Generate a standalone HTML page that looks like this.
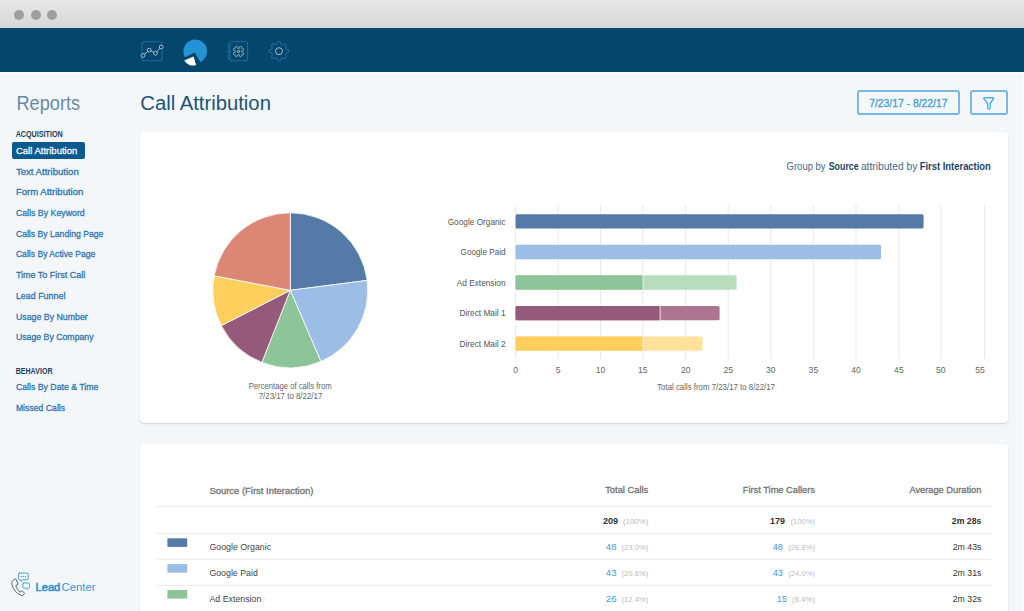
<!DOCTYPE html>
<html><head><meta charset="utf-8">
<style>
*{margin:0;padding:0;box-sizing:border-box}
html,body{width:1024px;height:611px;overflow:hidden;background:#f4f7f9;font-family:"Liberation Sans",sans-serif}
.abs{position:absolute}
#titlebar{left:0;top:0;width:1024px;height:28px;background:linear-gradient(#e8e8e8,#d6d6d6)}
.dot{width:10px;height:10px;border-radius:50%;background:#9e9e9e;top:9.5px}
#nav{left:0;top:28px;width:1024px;height:44px;background:#05466d}
.card{background:#fff;border-radius:4px;box-shadow:0 1px 1.5px rgba(70,100,130,0.22),0 0 1px rgba(70,100,130,0.12)}
svg{position:absolute;left:0;top:0}
</style></head><body>
<div id="titlebar" class="abs"></div>
<div class="abs dot" style="left:14px"></div>
<div class="abs dot" style="left:30.8px"></div>
<div class="abs dot" style="left:47.2px"></div>
<div id="nav" class="abs"></div>
<div class="abs" style="left:0;top:72px;width:1024px;height:2px;background:#fbfcfd"></div>
<div class="abs" style="left:1022.5px;top:72px;width:1.5px;height:539px;background:#fdfdfe"></div>

<div class="abs" style="left:12px;top:142.2px;width:73.3px;height:16.8px;background:#0b5a8f;border-radius:2px"></div>

<div class="abs" style="left:857.2px;top:90.3px;width:102.5px;height:24.8px;border:2px solid #78b7e3;border-radius:3px"></div>
<div class="abs" style="left:969.8px;top:90.3px;width:38.4px;height:24.8px;border:2px solid #78b7e3;border-radius:3px"></div>

<div class="abs card" style="left:140.2px;top:131.6px;width:867.8px;height:291.4px"></div>
<div class="abs card" style="left:140.2px;top:443.8px;width:867.8px;height:200px"></div>

<svg width="1024" height="611" viewBox="0 0 1024 611" font-family="Liberation Sans">
<!-- nav icons -->
<g fill="none" stroke="#1f6c9e" stroke-width="1.1">
  <rect x="142" y="41.8" width="20" height="19" rx="2"/>
</g>
<g fill="none" stroke="#a9bccb" stroke-width="1">
  <polyline points="143.1,55.5 149.2,50.1 155.5,53.2 161.2,47"/>
  <circle cx="143.1" cy="55.5" r="1.9" fill="#05466d"/>
  <circle cx="149.2" cy="50.1" r="1.9" fill="#05466d"/>
  <circle cx="155.5" cy="53.2" r="1.9" fill="#05466d"/>
  <circle cx="161.2" cy="47" r="1.9" fill="#05466d"/>
</g>
<!-- pie icon -->
<g transform="translate(0.8,-0.4)"><path d="M193.9,52.9 L199.6,62.3 A11.8,11.8 0 1 0 184.2,57.6 Z" fill="#2594d7"/></g>
<path d="M193.6,56.4 L196.1,65 A10,10 0 0 1 184.2,60.6 Z" fill="#ffffff"/>
<!-- notebook icon -->
<g fill="none" stroke="#1f6c9e" stroke-width="1.1">
  <rect x="229.4" y="41.8" width="18.2" height="19" rx="2"/>
  <circle cx="229.2" cy="45.7" r="1.5" fill="#05466d"/>
  <circle cx="229.2" cy="51.2" r="1.5" fill="#05466d"/>
  <circle cx="229.2" cy="56.7" r="1.5" fill="#05466d"/>
</g>
<g fill="none" stroke="#a9bccb" stroke-width="0.95" stroke-linejoin="round" transform="translate(238.5,51.5) scale(0.9)"><path d="M-3.6,-4.4 A1.3,1.3 0 0 1 -1.0,-4.4 V-3.6 H1.0 V-4.4 A1.3,1.3 0 0 1 3.6,-4.4 V-3.6 H4.4 A1.3,1.3 0 0 1 4.4,-1.0 H3.6 V1.0 H4.4 A1.3,1.3 0 0 1 4.4,3.6 H3.6 V4.4 A1.3,1.3 0 0 1 1.0,4.4 V3.6 H-1.0 V4.4 A1.3,1.3 0 0 1 -3.6,4.4 V3.6 H-4.4 A1.3,1.3 0 0 1 -4.4,1.0 H-3.6 V-1.0 H-4.4 A1.3,1.3 0 0 1 -4.4,-3.6 H-3.6 Z M-1.0,-1.0 H1.0 V1.0 H-1.0 Z"/></g>
<!-- gear icon -->
<path id="gear" fill="none" stroke="#1f6c9e" stroke-width="1.1" stroke-linejoin="round" d="M279.00,41.60 L279.30,41.61 L279.60,41.65 L279.89,41.73 L280.18,41.90 L280.43,42.20 L280.63,42.68 L280.79,43.21 L280.95,43.61 L281.13,43.86 L281.33,44.01 L281.55,44.13 L281.76,44.23 L281.98,44.32 L282.20,44.40 L282.43,44.47 L282.68,44.50 L282.99,44.46 L283.39,44.29 L283.88,44.03 L284.35,43.83 L284.75,43.79 L285.06,43.87 L285.33,44.02 L285.57,44.21 L285.79,44.41 L285.99,44.63 L286.18,44.87 L286.33,45.14 L286.41,45.45 L286.37,45.85 L286.17,46.32 L285.91,46.81 L285.74,47.21 L285.70,47.52 L285.73,47.77 L285.80,48.00 L285.88,48.22 L285.97,48.44 L286.07,48.65 L286.19,48.87 L286.34,49.07 L286.59,49.25 L286.99,49.41 L287.52,49.57 L288.00,49.77 L288.30,50.02 L288.47,50.31 L288.55,50.60 L288.59,50.90 L288.60,51.20 L288.59,51.50 L288.55,51.80 L288.47,52.09 L288.30,52.38 L288.00,52.63 L287.52,52.83 L286.99,52.99 L286.59,53.15 L286.34,53.33 L286.19,53.53 L286.07,53.75 L285.97,53.96 L285.88,54.18 L285.80,54.40 L285.73,54.63 L285.70,54.88 L285.74,55.19 L285.91,55.59 L286.17,56.08 L286.37,56.55 L286.41,56.95 L286.33,57.26 L286.18,57.53 L285.99,57.77 L285.79,57.99 L285.57,58.19 L285.33,58.38 L285.06,58.53 L284.75,58.61 L284.35,58.57 L283.88,58.37 L283.39,58.11 L282.99,57.94 L282.68,57.90 L282.43,57.93 L282.20,58.00 L281.98,58.08 L281.76,58.17 L281.55,58.27 L281.33,58.39 L281.13,58.54 L280.95,58.79 L280.79,59.19 L280.63,59.72 L280.43,60.20 L280.18,60.50 L279.89,60.67 L279.60,60.75 L279.30,60.79 L279.00,60.80 L278.70,60.79 L278.40,60.75 L278.11,60.67 L277.82,60.50 L277.57,60.20 L277.37,59.72 L277.21,59.19 L277.05,58.79 L276.87,58.54 L276.67,58.39 L276.45,58.27 L276.24,58.17 L276.02,58.08 L275.80,58.00 L275.57,57.93 L275.32,57.90 L275.01,57.94 L274.61,58.11 L274.12,58.37 L273.65,58.57 L273.25,58.61 L272.94,58.53 L272.67,58.38 L272.43,58.19 L272.21,57.99 L272.01,57.77 L271.82,57.53 L271.67,57.26 L271.59,56.95 L271.63,56.55 L271.83,56.08 L272.09,55.59 L272.26,55.19 L272.30,54.88 L272.27,54.63 L272.20,54.40 L272.12,54.18 L272.03,53.96 L271.93,53.75 L271.81,53.53 L271.66,53.33 L271.41,53.15 L271.01,52.99 L270.48,52.83 L270.00,52.63 L269.70,52.38 L269.53,52.09 L269.45,51.80 L269.41,51.50 L269.40,51.20 L269.41,50.90 L269.45,50.60 L269.53,50.31 L269.70,50.02 L270.00,49.77 L270.48,49.57 L271.01,49.41 L271.41,49.25 L271.66,49.07 L271.81,48.87 L271.93,48.65 L272.03,48.44 L272.12,48.22 L272.20,48.00 L272.27,47.77 L272.30,47.52 L272.26,47.21 L272.09,46.81 L271.83,46.32 L271.63,45.85 L271.59,45.45 L271.67,45.14 L271.82,44.87 L272.01,44.63 L272.21,44.41 L272.43,44.21 L272.67,44.02 L272.94,43.87 L273.25,43.79 L273.65,43.83 L274.12,44.03 L274.61,44.29 L275.01,44.46 L275.32,44.50 L275.57,44.47 L275.80,44.40 L276.02,44.32 L276.24,44.23 L276.45,44.13 L276.67,44.01 L276.87,43.86 L277.05,43.61 L277.21,43.21 L277.37,42.68 L277.57,42.20 L277.82,41.90 L278.11,41.73 L278.40,41.65 L278.70,41.61 Z"/>
<circle cx="279" cy="51.2" r="3.5" fill="none" stroke="#a9bccb" stroke-width="1"/>

<!-- logo icon -->
<g fill="none" stroke-linecap="round" stroke-linejoin="round">
  <path d="M15.5,579 C12.5,580 11,582 12,585 C13.5,589.5 16.5,593.5 20.5,595.2 C22.5,596 24,595 24.6,593.5 L22.2,590.8 L20.2,592 C18.3,590.8 16.5,588 15.8,585.5 L17.8,584.3 Z" stroke="#4b6880" stroke-width="1"/>
  <path d="M19.4,573.1 h8.1 a0.8,0.8 0 0 1 0.8,0.8 v5 a0.8,0.8 0 0 1 -0.8,0.8 h-5.2 l-1.1,1.9 l-0.5,-1.9 h-1.3 a0.8,0.8 0 0 1 -0.8,-0.8 v-5 a0.8,0.8 0 0 1 0.8,-0.8 z" stroke="#4da3d9" stroke-width="1"/>
  <path d="M23.6,583 h5.1 a0.7,0.7 0 0 1 0.7,0.7 v3.7 a0.7,0.7 0 0 1 -0.7,0.7 h-0.7 l-0.8,1.3 l-0.8,-1.3 h-2.8 a0.7,0.7 0 0 1 -0.7,-0.7 v-3.7 a0.7,0.7 0 0 1 0.7,-0.7 z" stroke="#4da3d9" stroke-width="1"/>
</g>
<g fill="#4da3d9"><circle cx="21.4" cy="576.4" r="0.75"/><circle cx="23.45" cy="576.4" r="0.75"/><circle cx="25.5" cy="576.4" r="0.75"/></g>
<!-- filter icon -->
<path d="M984,99 Q983.3,97.7 984.6,97.7 H992.8 Q994.1,97.7 993.4,99 L990.2,103.2 V107.9 Q990,109.2 988.9,109.1 Q987.6,108.9 987.6,107.6 V103.2 Z" fill="none" stroke="#5aaee2" stroke-width="1.45" stroke-linejoin="round"/>

<text x="16.5" y="110.1" font-size="20" fill="#6a89a2" textLength="63.6" lengthAdjust="spacingAndGlyphs">Reports</text>
<text x="15.7" y="137.0" font-size="8.2" fill="#1f3f5a" font-weight="bold" textLength="47.0" lengthAdjust="spacingAndGlyphs">ACQUISITION</text>
<text x="15.7" y="373.6" font-size="8.2" fill="#1f3f5a" font-weight="bold" textLength="36.8" lengthAdjust="spacingAndGlyphs">BEHAVIOR</text>
<text x="15.9" y="154.0" font-size="9.3" fill="#f2f7fb" textLength="61.4" lengthAdjust="spacingAndGlyphs" stroke="#f2f7fb" stroke-width="0.3">Call Attribution</text>
<text x="15.9" y="174.5" font-size="9.3" fill="#2f76ad" textLength="62.9" lengthAdjust="spacingAndGlyphs" stroke="#2f76ad" stroke-width="0.3">Text Attribution</text>
<text x="15.9" y="195.3" font-size="9.3" fill="#2f76ad" textLength="67.5" lengthAdjust="spacingAndGlyphs" stroke="#2f76ad" stroke-width="0.3">Form Attribution</text>
<text x="15.9" y="215.8" font-size="9.3" fill="#2f76ad" textLength="68.8" lengthAdjust="spacingAndGlyphs" stroke="#2f76ad" stroke-width="0.3">Calls By Keyword</text>
<text x="15.9" y="236.5" font-size="9.3" fill="#2f76ad" textLength="87.5" lengthAdjust="spacingAndGlyphs" stroke="#2f76ad" stroke-width="0.3">Calls By Landing Page</text>
<text x="15.9" y="257.4" font-size="9.3" fill="#2f76ad" textLength="79.4" lengthAdjust="spacingAndGlyphs" stroke="#2f76ad" stroke-width="0.3">Calls By Active Page</text>
<text x="15.9" y="278.2" font-size="9.3" fill="#2f76ad" textLength="69.3" lengthAdjust="spacingAndGlyphs" stroke="#2f76ad" stroke-width="0.3">Time To First Call</text>
<text x="15.9" y="299.0" font-size="9.3" fill="#2f76ad" textLength="49.5" lengthAdjust="spacingAndGlyphs" stroke="#2f76ad" stroke-width="0.3">Lead Funnel</text>
<text x="15.9" y="319.8" font-size="9.3" fill="#2f76ad" textLength="71.9" lengthAdjust="spacingAndGlyphs" stroke="#2f76ad" stroke-width="0.3">Usage By Number</text>
<text x="15.9" y="340.4" font-size="9.3" fill="#2f76ad" textLength="77.7" lengthAdjust="spacingAndGlyphs" stroke="#2f76ad" stroke-width="0.3">Usage By Company</text>
<text x="15.9" y="390.4" font-size="9.3" fill="#2f76ad" textLength="82.5" lengthAdjust="spacingAndGlyphs" stroke="#2f76ad" stroke-width="0.3">Calls By Date &amp; Time</text>
<text x="15.9" y="411.0" font-size="9.3" fill="#2f76ad" textLength="49.2" lengthAdjust="spacingAndGlyphs" stroke="#2f76ad" stroke-width="0.3">Missed Calls</text>
<text x="140.3" y="110.0" font-size="19.5" fill="#22527a" textLength="130.6" lengthAdjust="spacingAndGlyphs">Call Attribution</text>
<text x="869.2" y="106.9" font-size="10.5" fill="#4a9fd6" textLength="78.3" lengthAdjust="spacingAndGlyphs" stroke="#4a9fd6" stroke-width="0.35">7/23/17 - 8/22/17</text>
<text x="786.6" y="169.6" font-size="10" fill="#44678a"><tspan textLength="39" lengthAdjust="spacingAndGlyphs">Group by</tspan><tspan x="828.7" font-weight="bold" fill="#1e4468" textLength="30" lengthAdjust="spacingAndGlyphs">Source</tspan><tspan x="860.9" textLength="56.4" lengthAdjust="spacingAndGlyphs">attributed by</tspan><tspan x="919.7" font-weight="bold" fill="#1e4468" textLength="71.2" lengthAdjust="spacingAndGlyphs">First Interaction</tspan></text>
<path d="M290.3,290.3 L290.30,212.80 A77.5,77.5 0 0 1 367.17,280.42 Z" fill="#567aa8" stroke="#fff" stroke-width="0.8" stroke-linejoin="round"/>
<path d="M290.3,290.3 L367.17,280.42 A77.5,77.5 0 0 1 320.90,361.50 Z" fill="#9bbde6" stroke="#fff" stroke-width="0.8" stroke-linejoin="round"/>
<path d="M290.3,290.3 L320.90,361.50 A77.5,77.5 0 0 1 261.86,362.39 Z" fill="#8ec499" stroke="#fff" stroke-width="0.8" stroke-linejoin="round"/>
<path d="M290.3,290.3 L261.86,362.39 A77.5,77.5 0 0 1 221.33,325.64 Z" fill="#955a7a" stroke="#fff" stroke-width="0.8" stroke-linejoin="round"/>
<path d="M290.3,290.3 L221.33,325.64 A77.5,77.5 0 0 1 214.16,275.82 Z" fill="#fecf5d" stroke="#fff" stroke-width="0.8" stroke-linejoin="round"/>
<path d="M290.3,290.3 L214.16,275.82 A77.5,77.5 0 0 1 290.30,212.80 Z" fill="#dc8676" stroke="#fff" stroke-width="0.8" stroke-linejoin="round"/>
<text x="248.7" y="388.7" font-size="8.6" fill="#666" textLength="82.9" lengthAdjust="spacingAndGlyphs">Percentage of calls from</text>
<text x="258.7" y="398.9" font-size="8.6" fill="#666" textLength="63.6" lengthAdjust="spacingAndGlyphs">7/23/17 to 8/22/17</text>
<rect x="515.10" y="205" width="1" height="153.5" fill="#e8e8e8"/>
<text x="515.6" y="373.4" font-size="8.6" fill="#666" text-anchor="middle">0</text>
<rect x="557.70" y="205" width="1" height="153.5" fill="#e8e8e8"/>
<text x="558.2" y="373.4" font-size="8.6" fill="#666" text-anchor="middle">5</text>
<rect x="600.00" y="205" width="1" height="153.5" fill="#e8e8e8"/>
<text x="600.5" y="373.4" font-size="8.6" fill="#666" text-anchor="middle">10</text>
<rect x="642.30" y="205" width="1" height="153.5" fill="#e8e8e8"/>
<text x="642.8" y="373.4" font-size="8.6" fill="#666" text-anchor="middle">15</text>
<rect x="685.20" y="205" width="1" height="153.5" fill="#e8e8e8"/>
<text x="685.7" y="373.4" font-size="8.6" fill="#666" text-anchor="middle">20</text>
<rect x="727.70" y="205" width="1" height="153.5" fill="#e8e8e8"/>
<text x="728.2" y="373.4" font-size="8.6" fill="#666" text-anchor="middle">25</text>
<rect x="770.30" y="205" width="1" height="153.5" fill="#e8e8e8"/>
<text x="770.8" y="373.4" font-size="8.6" fill="#666" text-anchor="middle">30</text>
<rect x="812.90" y="205" width="1" height="153.5" fill="#e8e8e8"/>
<text x="813.4" y="373.4" font-size="8.6" fill="#666" text-anchor="middle">35</text>
<rect x="855.50" y="205" width="1" height="153.5" fill="#e8e8e8"/>
<text x="856.0" y="373.4" font-size="8.6" fill="#666" text-anchor="middle">40</text>
<rect x="898.40" y="205" width="1" height="153.5" fill="#e8e8e8"/>
<text x="898.9" y="373.4" font-size="8.6" fill="#666" text-anchor="middle">45</text>
<rect x="940.30" y="205" width="1" height="153.5" fill="#e8e8e8"/>
<text x="940.8" y="373.4" font-size="8.6" fill="#666" text-anchor="middle">50</text>
<rect x="984.00" y="205" width="1" height="153.5" fill="#e8e8e8"/>
<text x="980.0" y="373.4" font-size="8.6" fill="#666" text-anchor="middle">55</text>
<rect x="515.6" y="214.2" width="408.00" height="14.4" rx="1.5" fill="#567aa8"/>
<text x="447.7" y="225.0" font-size="9" fill="#555" textLength="57.9" lengthAdjust="spacingAndGlyphs">Google Organic</text>
<rect x="515.6" y="244.8" width="365.50" height="14.4" rx="1.5" fill="#9bbde6"/>
<text x="460.6" y="255.4" font-size="9" fill="#555" textLength="45.0" lengthAdjust="spacingAndGlyphs">Google Paid</text>
<rect x="515.6" y="275.3" width="221.00" height="14.4" rx="1.5" fill="#b8dcbe"/>
<rect x="515.6" y="275.3" width="127.50" height="14.4" rx="1.5" fill="#8ec499"/>
<rect x="642.6" y="275.3" width="1" height="14.4" fill="#fff" opacity="0.8"/>
<text x="456.7" y="285.9" font-size="9" fill="#555" textLength="48.9" lengthAdjust="spacingAndGlyphs">Ad Extension</text>
<rect x="515.6" y="305.9" width="204.00" height="14.4" rx="1.5" fill="#ad7590"/>
<rect x="515.6" y="305.9" width="144.50" height="14.4" rx="1.5" fill="#955a7a"/>
<rect x="659.6" y="305.9" width="1" height="14.4" fill="#fff" opacity="0.8"/>
<text x="459.4" y="316.4" font-size="9" fill="#555" textLength="46.2" lengthAdjust="spacingAndGlyphs">Direct Mail 1</text>
<rect x="515.6" y="336.4" width="187.00" height="14.4" rx="1.5" fill="#fee29a"/>
<rect x="515.6" y="336.4" width="127.50" height="14.4" rx="1.5" fill="#fecf5d"/>
<rect x="642.6" y="336.4" width="1" height="14.4" fill="#fff" opacity="0.8"/>
<text x="459.4" y="346.8" font-size="9" fill="#555" textLength="46.2" lengthAdjust="spacingAndGlyphs">Direct Mail 2</text>
<text x="657.2" y="389.8" font-size="8.6" fill="#666" textLength="117.8" lengthAdjust="spacingAndGlyphs">Total calls from 7/23/17 to 8/22/17</text>
<text x="209.4" y="493.6" font-size="9.3" fill="#727272" textLength="103.9" lengthAdjust="spacingAndGlyphs" stroke="#727272" stroke-width="0.3">Source (First Interaction)</text>
<text x="605.2" y="493.4" font-size="9.3" fill="#727272" textLength="43.1" lengthAdjust="spacingAndGlyphs" stroke="#727272" stroke-width="0.3">Total Calls</text>
<text x="742.8" y="493.4" font-size="9.3" fill="#727272" textLength="72.2" lengthAdjust="spacingAndGlyphs" stroke="#727272" stroke-width="0.3">First Time Callers</text>
<text x="909.4" y="493.4" font-size="9.3" fill="#727272" textLength="72.0" lengthAdjust="spacingAndGlyphs" stroke="#727272" stroke-width="0.3">Average Duration</text>
<rect x="157" y="505.9" width="834.2" height="1" fill="#ececec"/>
<rect x="157" y="533.1" width="834.2" height="1" fill="#ececec"/>
<rect x="157" y="558.8" width="834.2" height="1" fill="#ececec"/>
<rect x="157" y="585.0" width="834.2" height="1" fill="#ececec"/>
<text x="603.0" y="524.0" font-size="9.2" fill="#333" font-weight="bold" textLength="15.2" lengthAdjust="spacingAndGlyphs">209</text>
<text x="623.0" y="524.0" font-size="7" fill="#bbb" textLength="25.3" lengthAdjust="spacingAndGlyphs">(100%)</text>
<text x="770.1" y="524.0" font-size="9.2" fill="#333" font-weight="bold" textLength="14.9" lengthAdjust="spacingAndGlyphs">179</text>
<text x="790.4" y="524.0" font-size="7" fill="#bbb" textLength="24.6" lengthAdjust="spacingAndGlyphs">(100%)</text>
<text x="951.8" y="524.0" font-size="9.2" fill="#333" font-weight="bold" textLength="29.6" lengthAdjust="spacingAndGlyphs">2m 28s</text>
<rect x="167.4" y="538.3" width="19.8" height="8.6" fill="#567aa8"/>
<text x="209.4" y="550.2" font-size="9.3" fill="#444" textLength="61.7" lengthAdjust="spacingAndGlyphs">Google Organic</text>
<text x="605.8" y="550.2" font-size="9.2" fill="#3b9ad9" textLength="10.7" lengthAdjust="spacingAndGlyphs">48</text>
<text x="621.5" y="550.2" font-size="7" fill="#bbb" textLength="26.8" lengthAdjust="spacingAndGlyphs">(23.0%)</text>
<text x="772.8" y="550.2" font-size="9.2" fill="#3b9ad9" textLength="10.1" lengthAdjust="spacingAndGlyphs">48</text>
<text x="788.3" y="550.2" font-size="7" fill="#bbb" textLength="26.7" lengthAdjust="spacingAndGlyphs">(26.8%)</text>
<text x="952.7" y="550.2" font-size="9.2" fill="#333" textLength="28.7" lengthAdjust="spacingAndGlyphs">2m 43s</text>
<rect x="167.4" y="564.1" width="19.8" height="8.6" fill="#9bbde6"/>
<text x="209.4" y="576.0" font-size="9.3" fill="#444" textLength="48.4" lengthAdjust="spacingAndGlyphs">Google Paid</text>
<text x="605.8" y="576.0" font-size="9.2" fill="#3b9ad9" textLength="10.7" lengthAdjust="spacingAndGlyphs">43</text>
<text x="621.5" y="576.0" font-size="7" fill="#bbb" textLength="26.8" lengthAdjust="spacingAndGlyphs">(20.6%)</text>
<text x="772.8" y="576.0" font-size="9.2" fill="#3b9ad9" textLength="10.1" lengthAdjust="spacingAndGlyphs">43</text>
<text x="788.3" y="576.0" font-size="7" fill="#bbb" textLength="26.7" lengthAdjust="spacingAndGlyphs">(24.0%)</text>
<text x="952.7" y="576.0" font-size="9.2" fill="#333" textLength="28.7" lengthAdjust="spacingAndGlyphs">2m 31s</text>
<rect x="167.4" y="590.0" width="19.8" height="8.6" fill="#8ec499"/>
<text x="209.4" y="601.8" font-size="9.3" fill="#444" textLength="52.0" lengthAdjust="spacingAndGlyphs">Ad Extension</text>
<text x="605.8" y="601.8" font-size="9.2" fill="#3b9ad9" textLength="10.7" lengthAdjust="spacingAndGlyphs">26</text>
<text x="621.5" y="601.8" font-size="7" fill="#bbb" textLength="26.8" lengthAdjust="spacingAndGlyphs">(12.4%)</text>
<text x="777.1" y="601.8" font-size="9.2" fill="#3b9ad9" textLength="9.6" lengthAdjust="spacingAndGlyphs">15</text>
<text x="792.1" y="601.8" font-size="7" fill="#bbb" textLength="22.9" lengthAdjust="spacingAndGlyphs">(8.4%)</text>
<text x="952.7" y="601.8" font-size="9.2" fill="#333" textLength="28.7" lengthAdjust="spacingAndGlyphs">2m 32s</text>
<text x="35.6" y="590.9" font-size="11.2" fill="#2a8fd0"><tspan stroke="#2a8fd0" stroke-width="0.55" textLength="24.6" lengthAdjust="spacingAndGlyphs">Lead</tspan><tspan x="61.5" fill="#3497d6" textLength="34" lengthAdjust="spacingAndGlyphs">Center</tspan></text>
</svg>
</body></html>
